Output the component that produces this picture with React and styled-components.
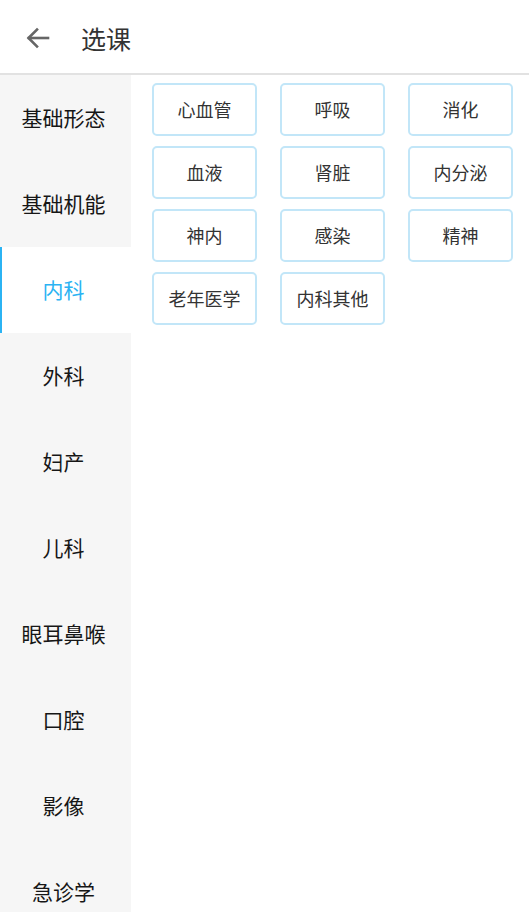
import React, { useState } from "react";
import styled, { createGlobalStyle } from "styled-components";

const Global = createGlobalStyle`
  html, body { margin: 0; padding: 0; background: #fff; }
  body { font-family: "Noto Sans CJK SC", "Noto Sans", sans-serif; }
  * { box-sizing: border-box; }
`;

const Page = styled.div`
  width: 529px;
  height: 912px;
  display: flex;
  flex-direction: column;
  overflow: hidden;
`;

const Header = styled.header`
  height: 75px;
  flex: none;
  display: flex;
  align-items: center;
  border-bottom: 2px solid #e2e2e2;
  padding: 3px 0 0 24px;
`;

const BackButton = styled.button`
  border: 0;
  background: none;
  padding: 0;
  width: 28px;
  height: 28px;
  display: flex;
  align-items: center;
  justify-content: center;
`;

const Title = styled.h1`
  margin: 0 0 0 29px;
  font-size: 25px;
  font-weight: 400;
  color: #333;
  line-height: 1;
`;

const Body = styled.div`
  flex: 1;
  display: flex;
  min-height: 0;
`;

const Sidebar = styled.nav`
  width: 131px;
  flex: none;
  background: #f6f6f6;
  display: flex;
  flex-direction: column;
`;

const SideItem = styled.div`
  height: 86px;
  flex: none;
  display: flex;
  align-items: center;
  justify-content: center;
  font-size: 21px;
  padding: 0 4px 3px 0;
  color: ${(p) => (p.$active ? "#2bb3f3" : "#161616")};
  background: ${(p) => (p.$active ? "#fff" : "transparent")};
  box-shadow: ${(p) => (p.$active ? "inset 2px 0 0 #2bb3f3" : "none")};
`;

const Content = styled.div`
  flex: 1;
  padding: 8px 16px 0 21px;
`;

const Grid = styled.div`
  display: grid;
  grid-template-columns: repeat(3, 105px);
  column-gap: 23px;
  row-gap: 10px;
`;

const Chip = styled.div`
  height: 53px;
  border: 2px solid #c2e6f8;
  border-radius: 5px;
  display: flex;
  align-items: center;
  justify-content: center;
  font-size: 18px;
  color: #333;
  padding-bottom: 2px;
`;

const sideItems = ["基础形态", "基础机能", "内科", "外科", "妇产", "儿科", "眼耳鼻喉", "口腔", "影像", "急诊学"];
const chips = ["心血管", "呼吸", "消化", "血液", "肾脏", "内分泌", "神内", "感染", "精神", "老年医学", "内科其他"];

export default function App() {
  const [active, setActive] = useState(2);
  return (
    <Page>
      <Global />
      <Header>
        <BackButton aria-label="返回">
          <svg width="28" height="28" viewBox="0 0 28 28" fill="none" stroke="#666" strokeWidth="2.6" strokeLinecap="square">
            <path d="M24 14H5" />
            <path d="M13 5.5L4.5 14L13 22.5" />
          </svg>
        </BackButton>
        <Title>选课</Title>
      </Header>
      <Body>
        <Sidebar>
          {sideItems.map((s, i) => (
            <SideItem key={s} $active={i === active} onClick={() => setActive(i)}>
              {s}
            </SideItem>
          ))}
        </Sidebar>
        <Content>
          <Grid>
            {chips.map((c) => (
              <Chip key={c}>{c}</Chip>
            ))}
          </Grid>
        </Content>
      </Body>
    </Page>
  );
}
